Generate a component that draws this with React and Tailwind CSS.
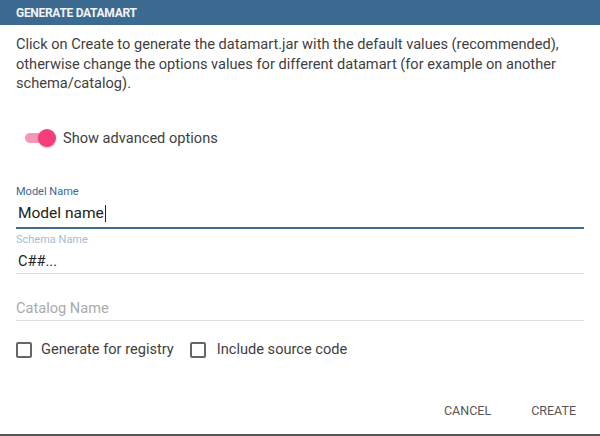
export default function App() {
  return (
    <div className="flex h-[436px] w-[600px] flex-col bg-white font-['Roboto',sans-serif] text-[#444]">
      {/* header */}
      <div className="flex h-[25px] items-center bg-[#3d6a91] px-4">
        <span className="text-[12px] font-bold tracking-[-0.3px] text-[#f2f5f8]">GENERATE DATAMART</span>
      </div>

      <div className="flex flex-1 flex-col px-4">
        <p className="mt-[10px] text-[14.6px] leading-[19.5px] text-[#3f3f3f]">
          Click on Create to generate the datamart.jar with the default values (recommended), otherwise change the options values for different datamart (for example on another schema/catalog).
        </p>

        {/* switch */}
        <div className="mt-[34px] flex items-center pl-[9px]">
          <div className="relative h-[10px] w-[30px] rounded-full bg-[#f597b7]">
            <div className="absolute -top-[4px] right-[-1px] h-[18px] w-[18px] rounded-full bg-[#f53d79] shadow-[0_1px_2px_rgba(0,0,0,0.25)]" />
          </div>
          <span className="ml-[8px] text-[14.6px] text-[#3f3f3f]">Show advanced options</span>
        </div>

        {/* model name */}
        <div className="mt-[36px] flex flex-col border-b-2 border-[#3d6a91] pb-[5px]">
          <span className="text-[11px] leading-[13px] text-[#3d6a91]">Model Name</span>
          <div className="mt-[6px] flex items-center pl-[2px] text-[15.5px] leading-[18px] text-[#222]">
            Model name<span className="ml-[1px] inline-block h-[17px] w-px bg-[#222]" />
          </div>
        </div>

        {/* schema name */}
        <div className="mt-[4px] flex flex-col border-b border-[#e0e0e0] pb-[3px]">
          <span className="text-[11px] leading-[13px] text-[#a3bcd6]">Schema Name</span>
          <span className="mt-[7px] pl-[2px] text-[14.6px] leading-[17px] text-[#222]">C##...</span>
        </div>

        {/* catalog name */}
        <div className="mt-[26px] flex flex-col border-b border-[#e0e0e0] pb-[3px]">
          <span className="text-[14.6px] leading-[17px] text-[#aaa]">Catalog Name</span>
        </div>

        {/* checkboxes */}
        <div className="mt-[18px] flex items-center text-[14.6px] text-[#3f3f3f]">
          <span className="h-[16px] w-[16px] rounded-[2px] border-2 border-[#666]" />
          <span className="ml-[9px]">Generate for registry</span>
          <span className="ml-[16px] h-[16px] w-[16px] rounded-[2px] border-2 border-[#666]" />
          <span className="ml-[11px]">Include source code</span>
        </div>

        {/* actions */}
        <div className="mt-auto mb-[9px] flex justify-end gap-[24px] text-[12.5px] text-[#555]">
          <button className="px-[8px] py-[4px]">CANCEL</button>
          <button className="px-[8px] py-[4px]">CREATE</button>
        </div>
      </div>
      <div className="h-[2px] bg-[#555]" />
    </div>
  );
}
